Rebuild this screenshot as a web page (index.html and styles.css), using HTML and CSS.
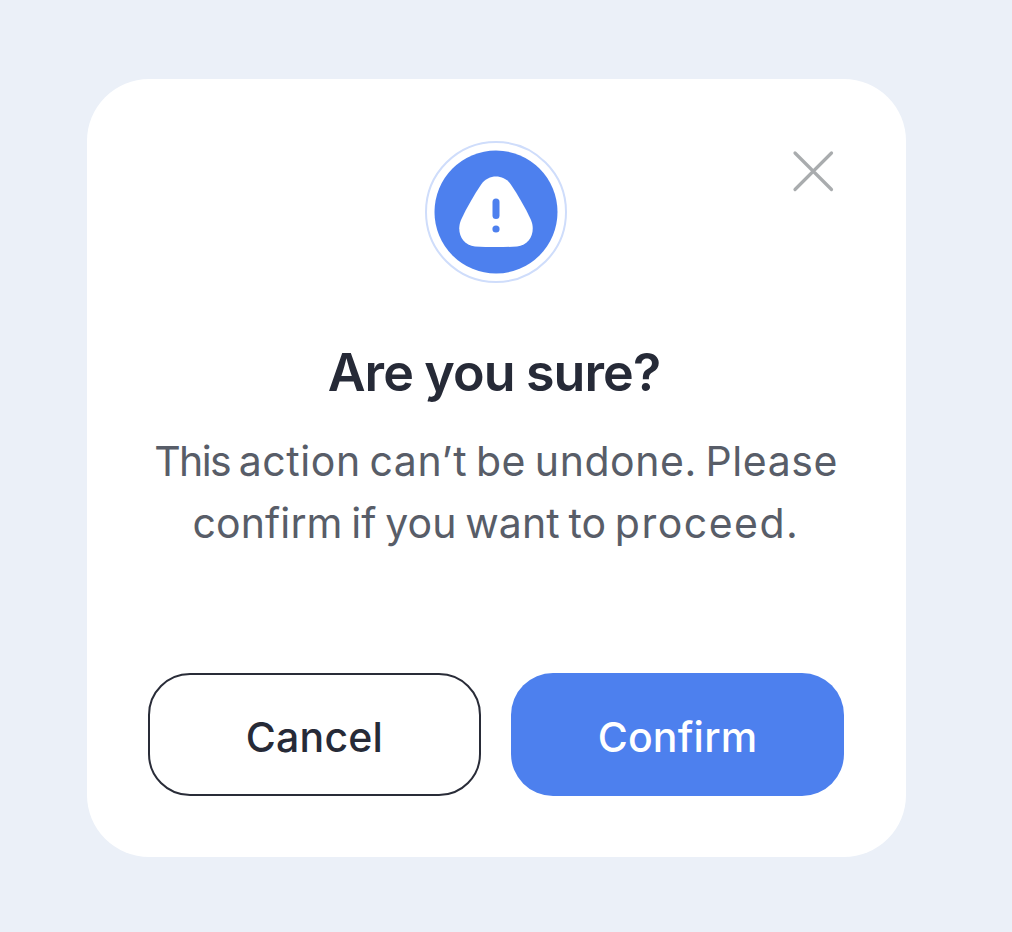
FILE: index.html
```html
<!DOCTYPE html>
<html lang="en">
<head>
<meta charset="utf-8">
<title>Confirm action</title>
<link rel="stylesheet" href="styles.css">
</head>
<body>
<main class="dialog" role="dialog" aria-labelledby="title">
  <button class="close" aria-label="Close">
    <svg width="44" height="44" viewBox="0 0 44 44"><path d="M4 4 40.500 40.500M40.500 4 4 40.500"/></svg>
  </button>
  <svg class="badge" width="142" height="142" viewBox="0 0 142 142">
    <circle class="ring" cx="71" cy="71" r="70"/>
    <circle class="disc" cx="71" cy="71" r="61.5"/>
    <path class="sign" d="M56.500 43C63.500 33 78.500 33 85.500 43C93 54 100.500 67 106 79C111 91 105 104.500 92 105.500C78 106.300 64 106.300 50 105.500C37 104.500 31 91 36 79C41.500 67 49 54 56.500 43Z"/>
    <path class="bar" d="M71 61V74.500"/>
    <circle class="disc" cx="71" cy="88" r="3.600"/>
  </svg>
  <h1 class="title" id="title">Are you sure?</h1>
  <p class="message">
    <span class="line line-first"><span class="lead">This</span> action can’t be undone. Please</span>
    <span class="line line-second">confirm if you want to <span class="trail">proceed.</span></span>
  </p>
  <div class="actions">
    <button class="button cancel">Cancel</button>
    <button class="button confirm">Confirm</button>
  </div>
</main>
</body>
</html>
```
FILE: styles.css
```css
* { box-sizing: border-box; }
body {
  margin: 0;
  height: 932px;
  padding: 79px 106px 75px 87px;
  background: #ebf0f8;
  font-family: Inter, "Liberation Sans", sans-serif;
}
.dialog {
  position: relative;
  display: flex;
  flex-direction: column;
  align-items: center;
  height: 778px;
  padding: 62px 62px 61px 61px;
  border-radius: 62px;
  background: #fff;
}
.close {
  position: absolute;
  top: 70px;
  right: 71px;
  width: 44px;
  height: 44px;
  padding: 0;
  border: 0;
  background: none;
}
.close svg { display: block; fill: none; stroke: #a9acae; stroke-width: 3.2; stroke-linecap: round; }
.badge { flex: none; display: block; }
.ring { fill: #fff; stroke: #cfddfb; stroke-width: 2; }
.disc { fill: #4d80ee; }
.sign { fill: #fff; }
.bar { fill: none; stroke: #4d80ee; stroke-width: 7; stroke-linecap: round; }
.title {
  margin: 57px 0 0;
  padding-right: 4px;
  color: #262a37;
  font-size: 52px;
  font-weight: 620;
  line-height: 66px;
  letter-spacing: -0.9px;
  word-spacing: -1px;
  white-space: nowrap;
}
.message {
  margin: 24px 0 0;
  color: #585d68;
  font-size: 41px;
  font-weight: 420;
  line-height: 62px;
  text-align: center;
}
.line { display: block; white-space: nowrap; }
.line-first { letter-spacing: 0.55px; word-spacing: -3.3px; }
.line-second { letter-spacing: 0.1px; word-spacing: -3px; }
.lead { letter-spacing: -1.6px; }
.trail { letter-spacing: 1.5px; }
.actions {
  display: grid;
  grid-template-columns: 333px 333px;
  gap: 30px;
  margin-top: auto;
}
.button {
  height: 123px;
  padding: 4px 0 0;
  border: 0;
  border-radius: 42px;
  font: 500 41px/50px Inter, "Liberation Sans", sans-serif;
  letter-spacing: 0.2px;
}
.cancel { border: 2px solid #292c38; background: #fff; color: #262a37; }
.confirm { background: #4d80ee; color: #fff; }
```
